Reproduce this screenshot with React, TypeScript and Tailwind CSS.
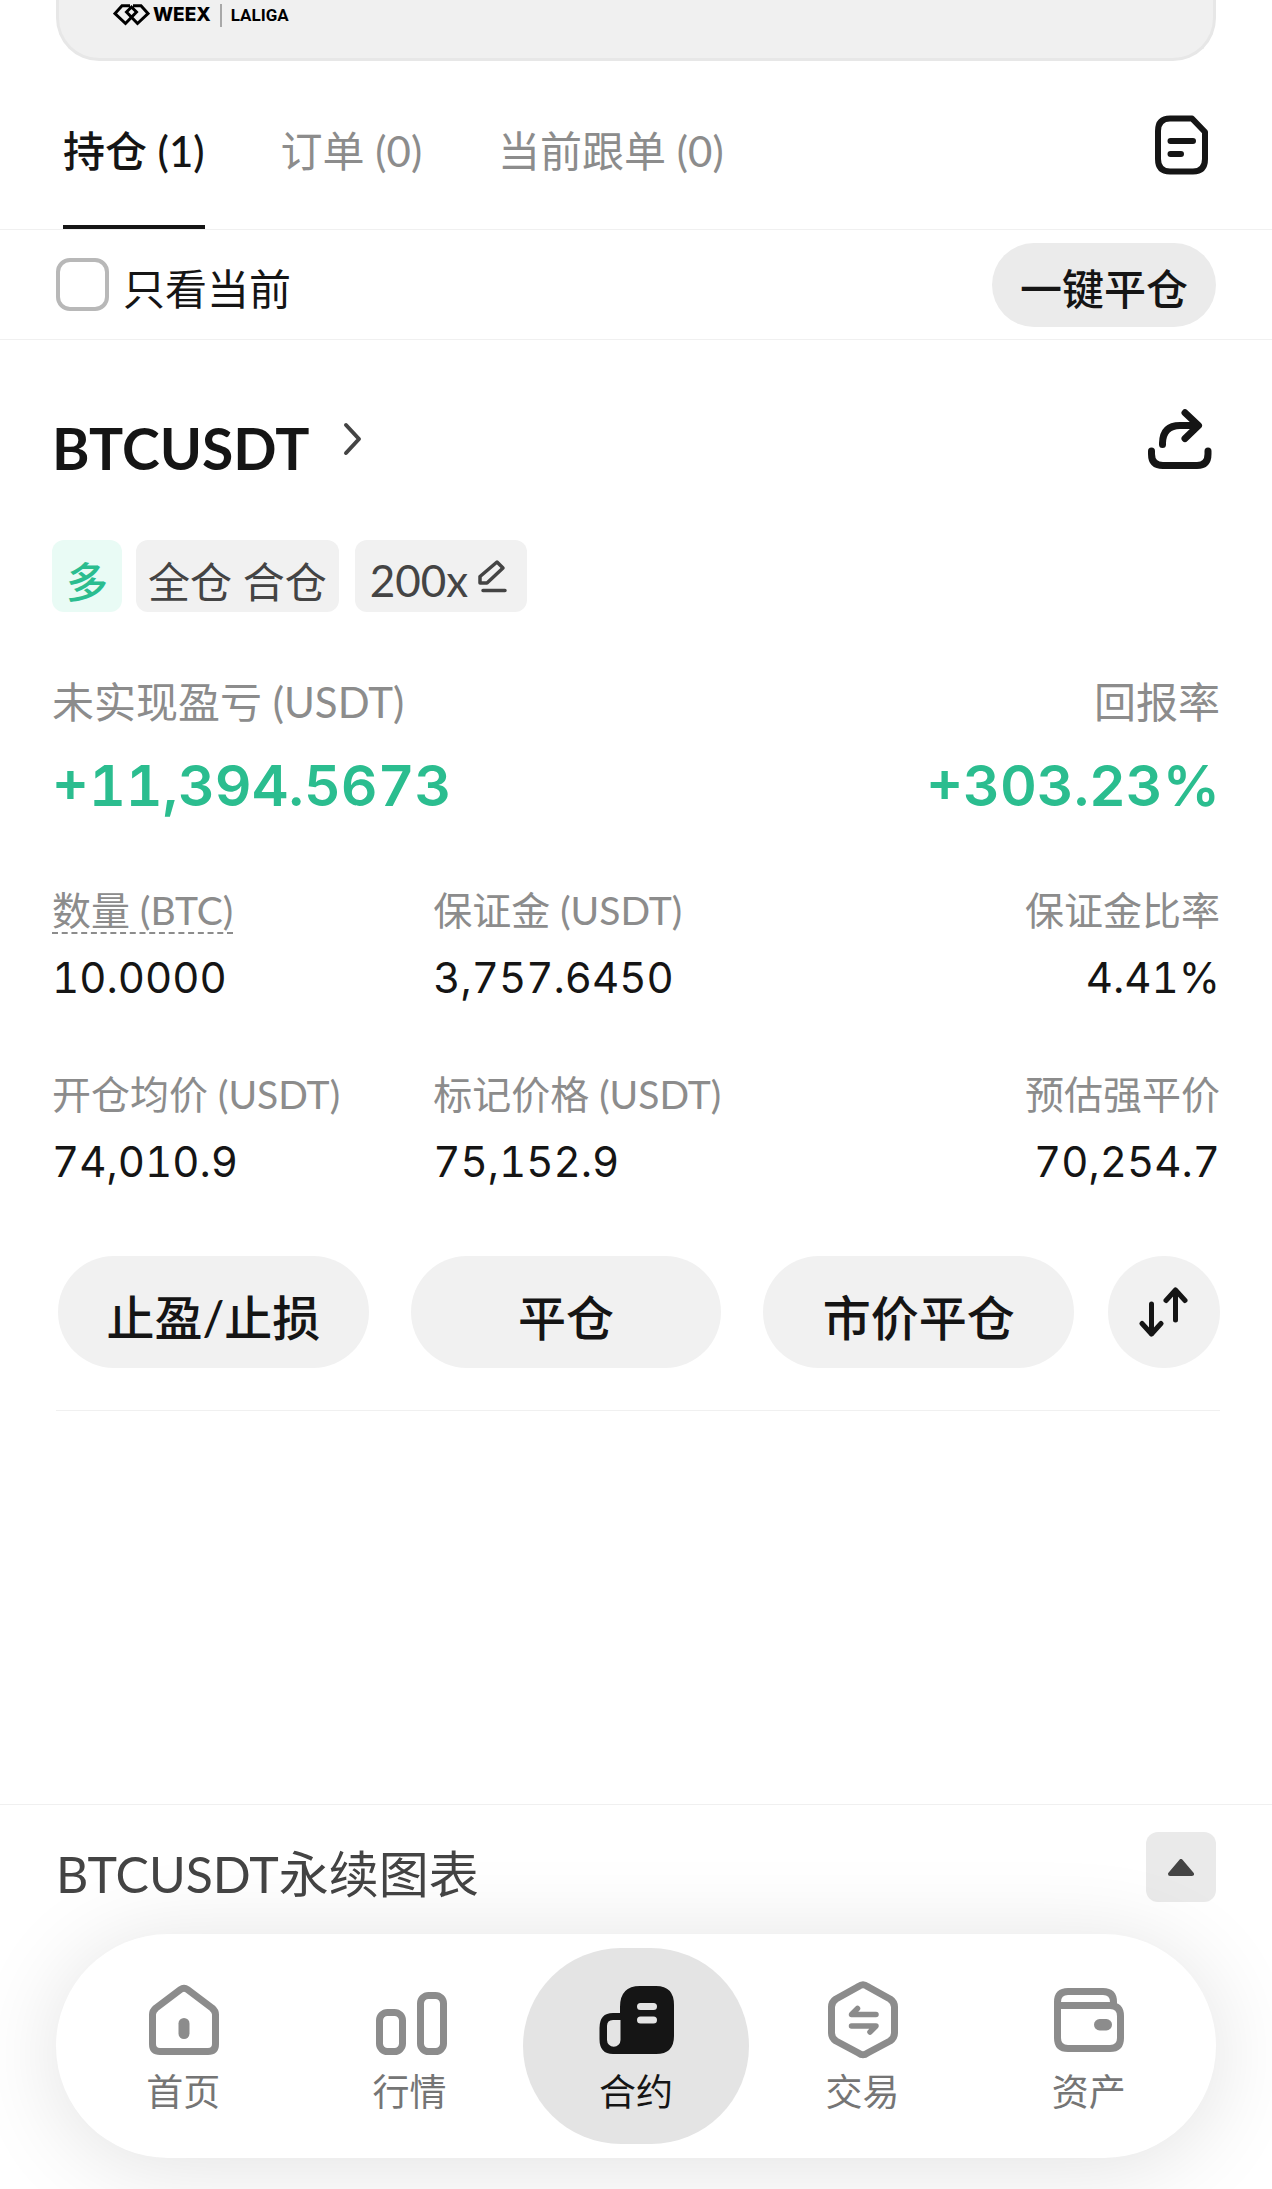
import { useState } from "react";
import type { ReactNode } from "react";

const tabs = ["持仓 (1)", "订单 (0)", "当前跟单 (0)"];

const stats = [
    { label: "数量 (BTC)", value: "10.0000", hint: true },
    { label: "保证金 (USDT)", value: "3,757.6450" },
    { label: "保证金比率", value: "4.41%", right: true },
    { label: "开仓均价 (USDT)", value: "74,010.9" },
    { label: "标记价格 (USDT)", value: "75,152.9" },
    { label: "预估强平价", value: "70,254.7", right: true },
];

const HomeIcon = () => (
    <svg width="80" height="80" viewBox="0 0 80 80" fill="none" stroke="currentColor" strokeWidth="7" strokeLinejoin="round">
        <path d="M37.500 9.500 Q41 7 44.500 9.500 L69 28 Q72.500 31 72.500 34.500 V64 Q72.500 71.500 65 71.500 H17 Q9.500 71.500 9.500 64 V34.500 Q9.500 31 13 28 Z" />
        <rect x="35.500" y="38" width="11" height="21" rx="5.500" fill="currentColor" stroke="none" />
    </svg>
);

const MarketIcon = () => (
    <svg width="80" height="80" viewBox="0 0 80 80" fill="none" stroke="currentColor" strokeWidth="7">
        <rect x="9.500" y="32.500" width="23" height="39" rx="8" />
        <rect x="50.500" y="15.500" width="23" height="56" rx="8" />
    </svg>
);

const FuturesIcon = () => (
    <svg width="80" height="80" viewBox="0 0 80 80" fill="none">
        <path
            fill="currentColor"
            fillRule="evenodd"
            d="M24 33 V27 Q24 6 44 6 H60 Q78 6 78 25 V56 Q78 74 60 74 H17 Q3.500 74 3.500 59 V48 Q3.500 33 17 33 Z M24.500 40 H17 Q11 40 11 46 V60 A6.700 6.700 0 0 0 24.500 60 Z"
        />
        <path d="M44.500 26.500 H57.500 M44.500 40 H57.500" stroke="#e4e4e4" strokeWidth="7" strokeLinecap="round" />
    </svg>
);

const TradeIcon = () => (
    <svg width="80" height="80" viewBox="0 0 80 80" fill="none" stroke="currentColor" strokeLinecap="round" strokeLinejoin="round">
        <path
            strokeWidth="7"
            d="M36.500 6.500 Q41 3 45.500 6.500 L68 19 Q72.500 22 72.500 27 V53 Q72.500 58 68 61 L45.500 73 Q41 76.500 36.500 73 L14 61 Q9.500 58 9.500 53 V27 Q9.500 22 14 19 Z"
        />
        <path strokeWidth="5.500" d="M54 34.500 H29.500 L35.500 28.500 M29.500 46 H54 L48 52" />
    </svg>
);

const WalletIcon = () => (
    <svg width="80" height="80" viewBox="0 0 80 80" fill="none" stroke="currentColor" strokeWidth="7">
        <path d="M8.500 26 V22 Q8.500 11.500 19 11.500 H54 Q64.500 11.500 64.500 22 V26" />
        <path d="M8.500 25.500 H61 Q71.500 25.500 71.500 36 V58 Q71.500 68.500 61 68.500 H19 Q8.500 68.500 8.500 58 Z" />
        <rect x="45" y="39" width="18" height="11.500" rx="5.700" fill="currentColor" stroke="none" />
    </svg>
);

const navItems: { label: string; icon: ReactNode }[] = [
    { label: "首页", icon: <HomeIcon /> },
    { label: "行情", icon: <MarketIcon /> },
    { label: "合约", icon: <FuturesIcon /> },
    { label: "交易", icon: <TradeIcon /> },
    { label: "资产", icon: <WalletIcon /> },
];

function Banner() {
    return (
        <header className="mx-14 h-[61px] rounded-b-[43px] border-[3px] border-t-0 border-[#e7e7e7] bg-[#f0f0f0] px-[54px] pt-1 text-black">
            <div className="flex h-[22px] items-center">
                <svg width="37" height="22" viewBox="0 0 37 22" fill="none" stroke="currentColor" strokeWidth="3">
                    <path d="M17 1.700 H9 L2 9.500 L12.500 19.500 L23.500 8 L18.500 3 L13.500 8 L24.500 19.500 L35 9.500 L28 1.700 H20" />
                </svg>
                <span className="ml-[3px] font-[Inter] text-[19px] leading-[22px] font-extrabold">WEEX</span>
                <span className="mx-[9px] h-[23px] w-[2px] bg-[#a8a8a8]"></span>
                <span className="font-[Roboto] text-[17px] leading-[22px] font-bold">LALIGA</span>
            </div>
        </header>
    );
}

function PositionCard() {
    return (
        <section className="px-[52px]">
            <div className="flex items-center justify-between pt-[58px] pr-2">
                <a href="#btcusdt" className="flex items-center gap-[34px]">
                    <h2 className="pt-[18px] text-[57px] leading-[64px] font-bold">BTCUSDT</h2>
                    <svg width="20" height="36" viewBox="0 0 20 36" fill="none" stroke="#444" strokeWidth="4" strokeLinecap="round" strokeLinejoin="round">
                        <path d="M3 4 L16 18 L3 32" />
                    </svg>
                </a>
                <button aria-label="分享">
                    <svg width="64" height="60" viewBox="0 0 64 60" fill="none" stroke="currentColor" strokeWidth="7" strokeLinecap="round" strokeLinejoin="round">
                        <path d="M3.500 42 V45 Q3.500 56.500 15 56.500 H49 Q60 56.500 60 45 V42" />
                        <path d="M14.500 35.500 V34 Q15 16.500 32 16.500 H50 M37 3.800 L50.500 16.500 L37 29.500" />
                    </svg>
                </button>
            </div>

            <div className="mt-[60px] flex text-[42px] leading-[64px] text-[#444]">
                <span className="h-[72px] w-[70px] rounded-xl bg-[#e9fbf5] pt-[10px] text-center font-medium text-[#2bbd8f]">多</span>
                <span className="ml-[14px] h-[72px] rounded-xl bg-[#f1f1f1] px-3 pt-[10px]">全仓 合仓</span>
                <button className="ml-4 flex h-[72px] items-center gap-[10px] rounded-xl bg-[#f1f1f1] pr-5 pl-[15px]">
                    <span className="pt-2 text-[44px]">200x</span>
                    <svg width="29" height="34" viewBox="0 0 29 34" fill="none" stroke="currentColor" strokeWidth="3.5" strokeLinecap="round" strokeLinejoin="round">
                        <path d="M2 17.500 L19 3 L25 9 L9 24 H2 Z M5 31.500 H27" />
                    </svg>
                </button>
            </div>

            <dl className="mt-[62px] flex justify-between">
                <div>
                    <dt className="text-[42px] leading-[56px] text-[#8c8c8c]">未实现盈亏 (USDT)</dt>
                    <dd className="mt-5 font-[Inter] text-[57px] leading-[72px] font-semibold text-[#2bbd8f] tabular-nums">+11,394.5673</dd>
                </div>
                <div className="text-right">
                    <dt className="text-[42px] leading-[56px] text-[#8c8c8c]">回报率</dt>
                    <dd className="mt-5 font-[Inter] text-[57px] leading-[72px] font-semibold text-[#2bbd8f] tabular-nums">+303.23%</dd>
                </div>
            </dl>

            <dl className="mt-[60px] grid grid-cols-[47fr_47fr_50fr] gap-y-16">
                {stats.map((item) => (
                    <div key={item.label} className={item.right ? "text-right" : ""}>
                        <dt className="text-[39px] leading-[56px] text-[#8c8c8c]">
                            <span className={item.hint ? "underline decoration-dashed decoration-2 underline-offset-[7px]" : ""}>{item.label}</span>
                        </dt>
                        <dd className="mt-4 font-[Inter] text-[42px] leading-[48px] tabular-nums">{item.value}</dd>
                    </div>
                ))}
            </dl>

            <div className="mt-[70px] flex gap-[42px] pb-[42px] pl-[6px] text-[48px]">
                {["止盈/止损", "平仓", "市价平仓"].map((label) => (
                    <button key={label} className="h-28 flex-1 rounded-full bg-[#f1f1f1] pt-3 font-medium">
                        {label}
                    </button>
                ))}
                <button aria-label="反手" className="-ml-2 flex size-28 items-center justify-center rounded-full bg-[#f1f1f1]">
                    <svg width="50" height="50" viewBox="0 0 50 50" fill="none" stroke="currentColor" strokeWidth="5" strokeLinecap="round" strokeLinejoin="round">
                        <path d="M12.500 17 V47 M3 36.500 L12.500 47 L22 36.500 M36.500 33 V3 M27 13.500 L36.500 3 L46 13.500" />
                    </svg>
                </button>
            </div>
            <hr className="ml-1 border-[#f0f0f0]" />
        </section>
    );
}

function BottomNav() {
    const [current, setCurrent] = useState(2);
    return (
        <nav className="mx-14 mb-[31px] grid grid-cols-5 rounded-full bg-white p-[14px] shadow-[0_8px_90px_rgba(0,0,0,0.12)]">
            {navItems.map((item, i) => (
                <button
                    key={item.label}
                    onClick={() => setCurrent(i)}
                    className={`flex h-[196px] flex-col items-center rounded-full pt-8 ${i === current ? "bg-[#e4e4e4] text-[#151515]" : "text-[#8c8c8c]"}`}
                >
                    {item.icon}
                    <span className={`mt-2 text-[37px] leading-[48px] ${i === current ? "" : "text-[#757575]"}`}>{item.label}</span>
                </button>
            ))}
        </nav>
    );
}

export default function App() {
    const [tab, setTab] = useState(0);
    return (
        <div className="flex min-h-screen flex-col overflow-hidden bg-white font-[Lato,'Noto_Sans_CJK_SC',sans-serif] text-[#151515]">
            <Banner />

            {/* Tabs */}
            <div className="flex h-[169px] items-center justify-between border-b border-[#f0f0f0] pr-16 pl-[63px]">
                <div className="flex h-full gap-[76px] text-[42px]">
                    {tabs.map((name, i) => (
                        <button
                            key={name}
                            onClick={() => setTab(i)}
                            className={`border-b-4 pt-4 ${i === tab ? "border-[#151515] font-medium" : "border-transparent text-[#8c8c8c]"}`}
                        >
                            {name}
                        </button>
                    ))}
                </div>
                <button aria-label="历史记录">
                    <svg width="53" height="60" viewBox="0 0 53 60" fill="none" stroke="currentColor" strokeWidth="6" strokeLinecap="round" strokeLinejoin="round">
                        <path d="M15 3.500 H37 L50 17 V44 Q50 56.500 38 56.500 H15 Q3 56.500 3 44 V16 Q3 3.500 15 3.500 Z" />
                        <path d="M15.500 26 H38 M15.500 39 H26" />
                    </svg>
                </button>
            </div>

            {/* Filter row */}
            <div className="flex h-[110px] items-center justify-between border-b border-[#f0f0f0] px-14 text-[42px]">
                <label className="flex items-center gap-[14px]">
                    <input type="checkbox" className="size-[53px] appearance-none rounded-[14px] border-4 border-[#b8b8b8] bg-white checked:bg-[#151515]" />
                    <span className="pt-[10px]">只看当前</span>
                </label>
                <button className="h-[84px] rounded-full bg-[#ebebeb] px-7 pt-[10px] font-medium">一键平仓</button>
            </div>

            <PositionCard />

            {/* Chart drawer */}
            <div className="mt-auto flex h-[130px] items-start justify-between border-t border-[#f0f0f0] px-14 pt-[27px] text-[#444]">
                <h3 className="pt-3 text-[50px] leading-[60px]">BTCUSDT永续图表</h3>
                <button aria-label="展开图表" className="flex size-[70px] items-center justify-center rounded-xl bg-[#eaeaea]">
                    <svg width="26" height="17" viewBox="0 0 26 17" fill="currentColor" stroke="currentColor" strokeWidth="4" strokeLinejoin="round">
                        <path d="M13 2 L24 15 H2 Z" />
                    </svg>
                </button>
            </div>

            <BottomNav />
        </div>
    );
}
